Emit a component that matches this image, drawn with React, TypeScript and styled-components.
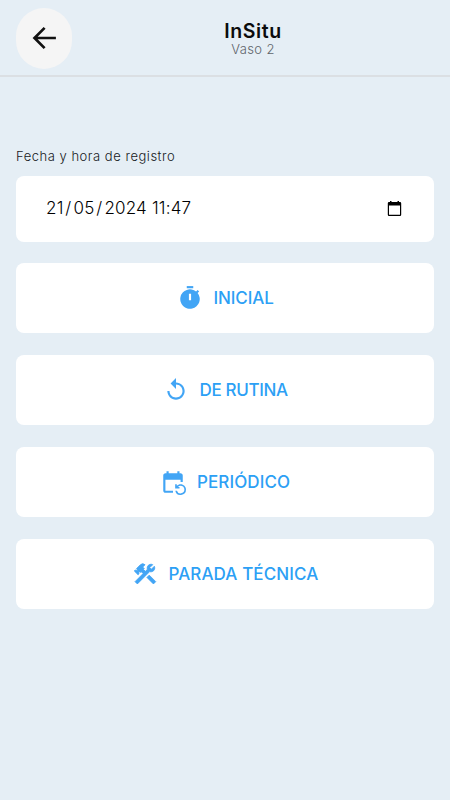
import React from "react";
import styled, { createGlobalStyle } from "styled-components";
import { MdReplay, MdEventRepeat, MdConstruction } from "react-icons/md";

const GlobalStyle = createGlobalStyle`
  * { box-sizing: border-box; }
  body { margin: 0; background: #e5eef5; font-family: Inter, "Open Sans", sans-serif; }
`;

const Screen = styled.div`
  min-height: 800px;
  background: #e5eef5;
`;

const Header = styled.header`
  height: 77px;
  display: grid;
  grid-template-columns: 56px 1fr;
  padding: 8px 16px 0;
  border-bottom: 2px solid #dbdfe3;
`;

const BackButton = styled.button`
  width: 56px;
  height: 61px;
  border: 0;
  border-radius: 28px;
  background: #f5f5f5;
  padding: 0 1px 1px 0;
  display: flex;
  align-items: center;
  justify-content: center;
`;

const Titles = styled.div`
  display: flex;
  flex-direction: column;
  align-items: center;
  padding-top: 12px;
`;

const Title = styled.h1`
  margin: 0;
  font-size: 19.5px;
  line-height: 22px;
  font-weight: 600;
  letter-spacing: 0.6px;
  color: #0b0b0c;
`;

const Subtitle = styled.span`
  font-size: 13px;
  line-height: 14px;
  font-weight: 300;
  letter-spacing: 0.4px;
  color: #5f656b;
`;

const Content = styled.main`
  display: flex;
  flex-direction: column;
  padding: 69px 16px 0;
`;

const Label = styled.label`
  height: 20px;
  line-height: 20px;
  margin-bottom: 10px;
  font-size: 13px;
  font-weight: 300;
  letter-spacing: 0.52px;
  color: #16191c;
  white-space: nowrap;
`;

const DateField = styled.div`
  height: 65.5px;
  padding: 0 32px 1px 30px;
  display: flex;
  align-items: center;
  justify-content: space-between;
  background: #fff;
  border-radius: 8px;
`;

const DateValue = styled.span`
  font-size: 17px;
  line-height: 24px;
  font-weight: 300;
  color: #000;
  letter-spacing: 0.2px;
  white-space: pre;
`;

const Slash = styled.span`
  margin: 0 2px 0 1.8px;
`;

const Actions = styled.div`
  display: flex;
  flex-direction: column;
  gap: 22px;
  margin-top: 21.5px;
`;

const ActionButton = styled.button`
  height: 70px;
  border: 0;
  border-radius: 8px;
  background: #fff;
  color: #42a5f5;
  font-family: inherit;
  display: flex;
  align-items: center;
  justify-content: center;
  gap: 11px;
  padding: 0;
`;

const ActionLabel = styled.span<{ $width: number; $track: number }>`
  width: ${(p) => p.$width}px;
  white-space: nowrap;
  text-align: left;
  font-size: 17px;
  line-height: 24px;
  font-weight: 500;
  letter-spacing: ${(p) => p.$track}px;
  color: #2ca0f5;
`;

const ToolsIcon = styled(MdConstruction)`
  stroke: currentColor;
  stroke-width: 0.8px;

  path[fill="none"] {
    stroke: none;
  }
`;

const TimerIcon = () => (
  <svg width="26" height="26" viewBox="0 0 24 24" fill="currentColor">
    <path d="M9 1h6v2H9z" />
    <path
      fillRule="evenodd"
      d="M19.03 7.39l1.42-1.42c-.43-.51-.9-.99-1.41-1.41l-1.42 1.42A9 9 0 1 0 19.03 7.39zM11 8h2v6h-2z"
    />
  </svg>
);

const BackIcon = () => (
  <svg width="26" height="26" viewBox="0 0 26 26" fill="none" stroke="#111" strokeWidth="2.7">
    <path d="M13.6 2.9 3.5 13 13.6 23.1M3.5 13H24.9" />
  </svg>
);

const CalendarIcon = () => (
  <svg width="15" height="17" viewBox="0 0 15 17">
    <path
      fillRule="evenodd"
      d="M3 1h1.5v1h6V1H12v1h1a1.2 1.2 0 0 1 1.2 1.2v11.6A1.2 1.2 0 0 1 13 16H2a1.2 1.2 0 0 1-1.2-1.2V3.2A1.2 1.2 0 0 1 2 2h1zM2 5.5v9.3h11V5.5z"
    />
  </svg>
);

const actions = [
  { label: "INICIAL", icon: <TimerIcon />, width: 60, track: -0.1 },
  { label: "DE RUTINA", icon: <MdReplay size={26} />, width: 88, track: -0.35 },
  { label: "PERIÓDICO", icon: <MdEventRepeat size={26} />, width: 93, track: 0.1 },
  { label: "PARADA TÉCNICA", icon: <ToolsIcon size={26} />, width: 150, track: 0.1 },
];

export default function App() {
  return (
    <Screen>
      <GlobalStyle />
      <Header>
        <BackButton aria-label="Volver">
          <BackIcon />
        </BackButton>
        <Titles>
          <Title>InSitu</Title>
          <Subtitle>Vaso 2</Subtitle>
        </Titles>
      </Header>
      <Content>
        <Label>Fecha y hora de registro</Label>
        <DateField>
          <DateValue>
            21<Slash>/</Slash>05<Slash>/</Slash>2024 11:47
          </DateValue>
          <CalendarIcon />
        </DateField>
        <Actions>
          {actions.map((a) => (
            <ActionButton key={a.label}>
              {a.icon}
              <ActionLabel $width={a.width} $track={a.track}>
                {a.label}
              </ActionLabel>
            </ActionButton>
          ))}
        </Actions>
      </Content>
    </Screen>
  );
}
